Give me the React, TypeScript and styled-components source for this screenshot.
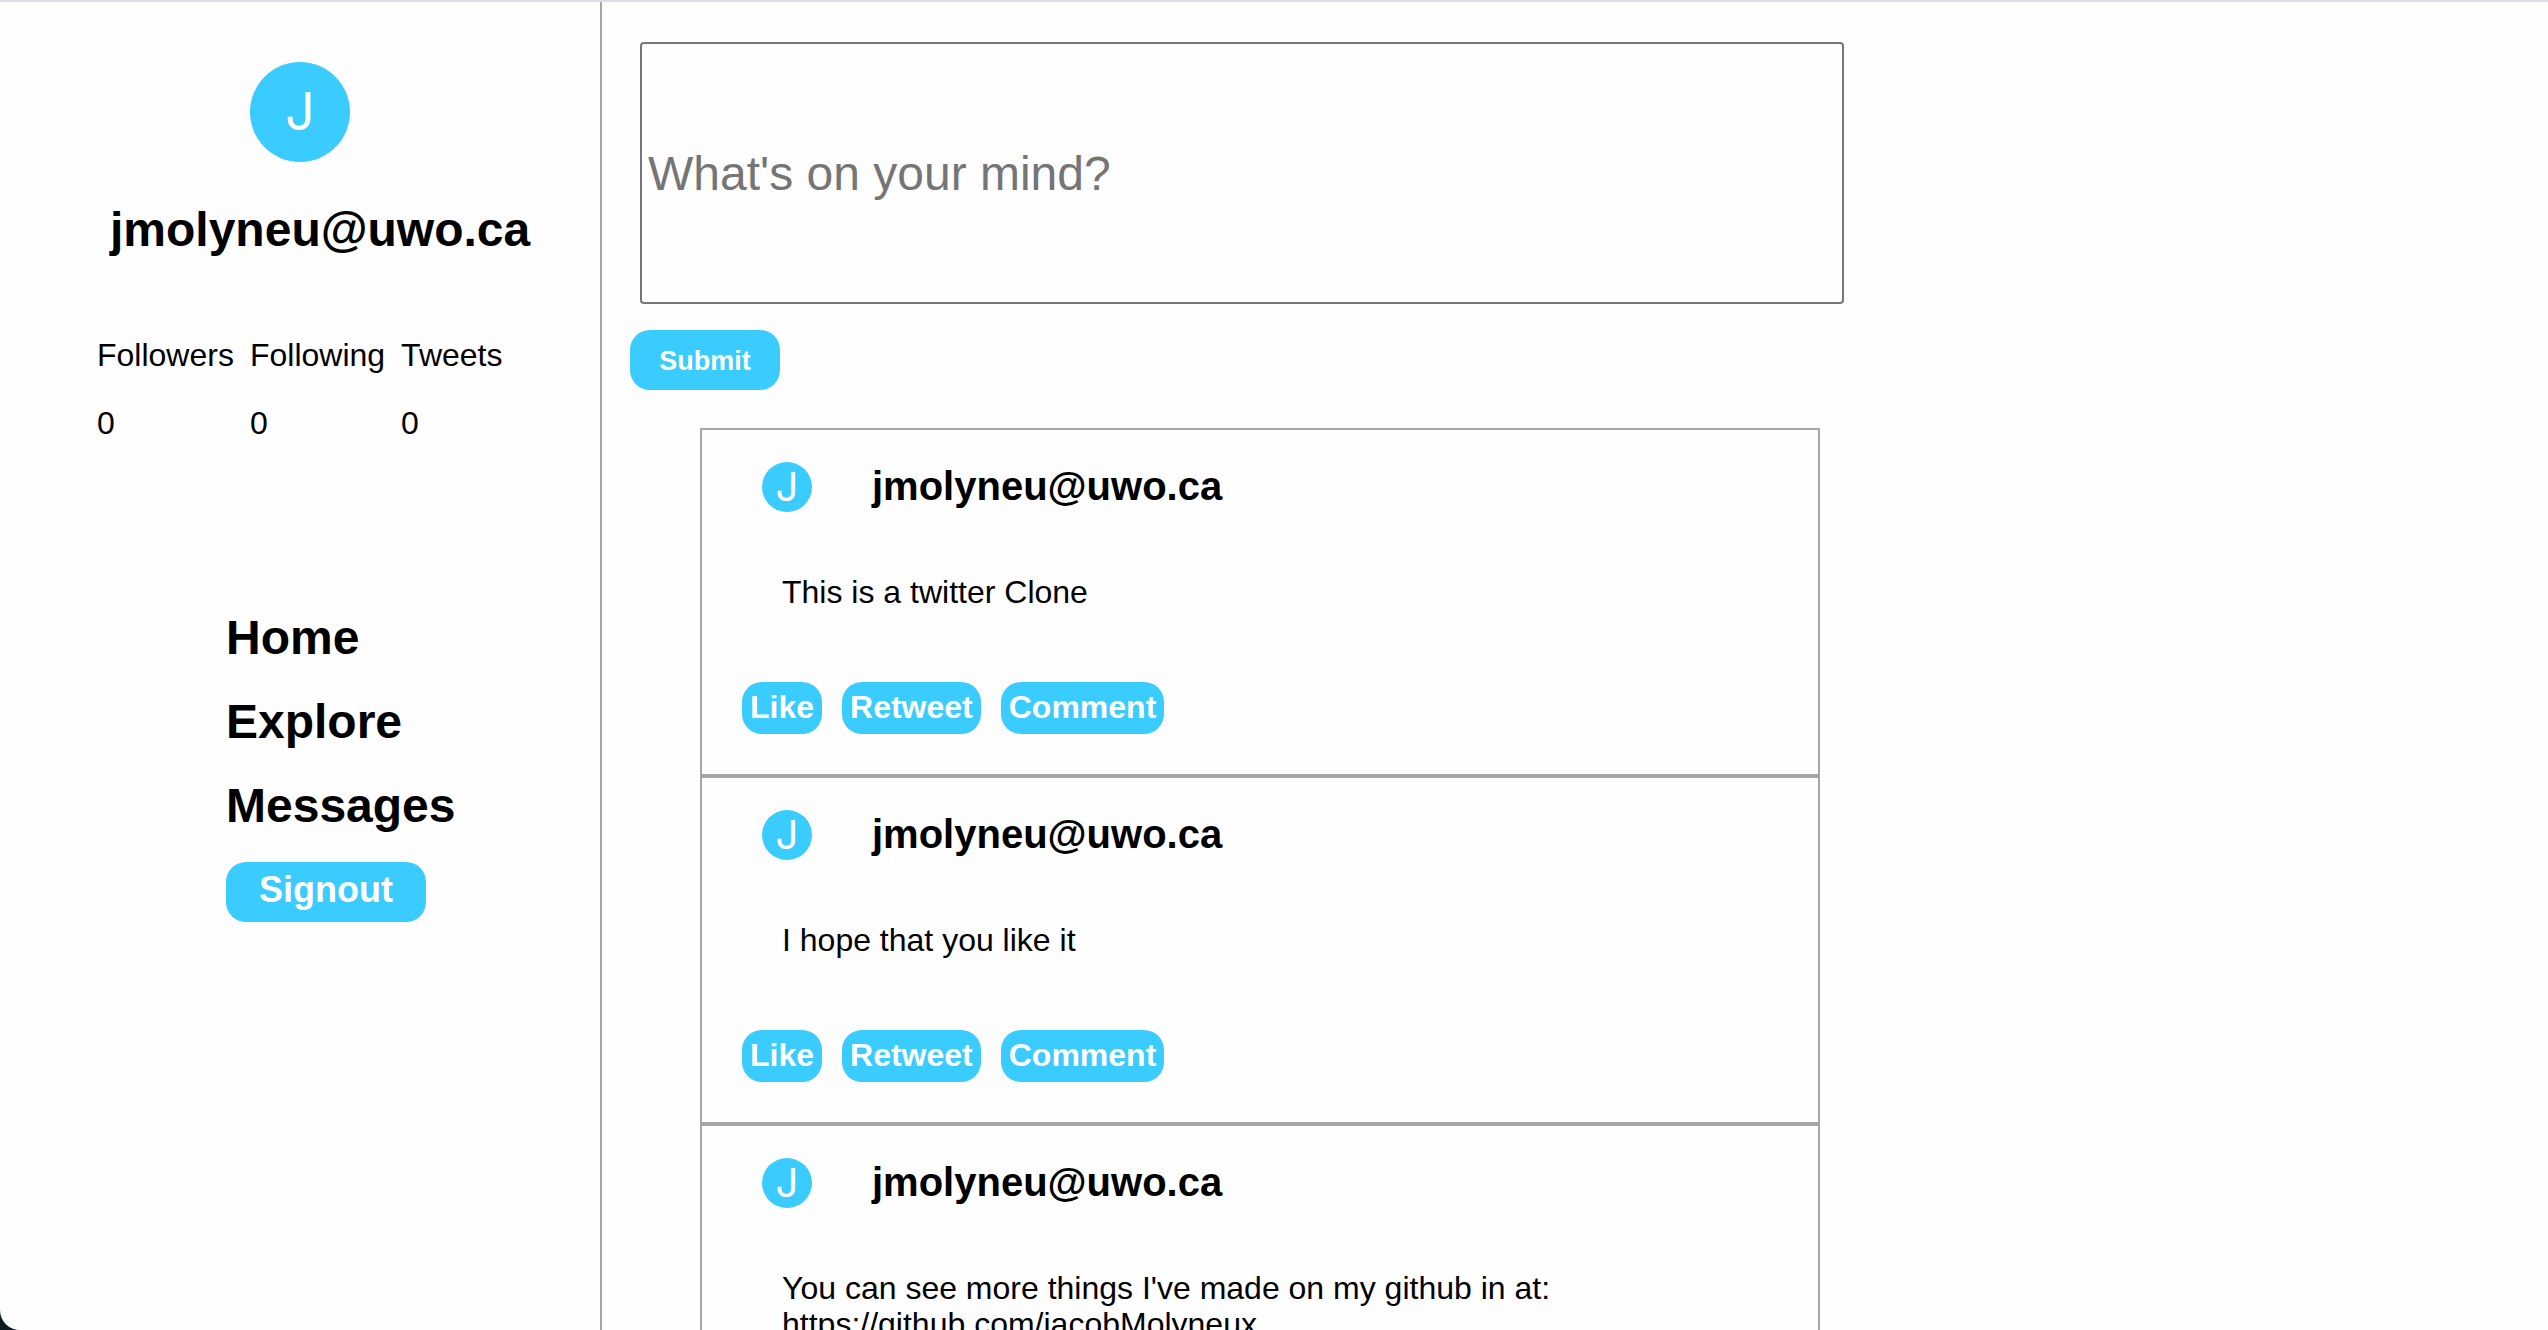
import React from "react";
import styled, { createGlobalStyle } from "styled-components";

const BLUE = "#3acbff";
const LINE = "#a6a6a6";

const GlobalStyle = createGlobalStyle`
  *, *::before, *::after { box-sizing: border-box; }
  body {
    margin: 0;
    background: #0b1c24;
    color: #000;
    font-family: "Liberation Sans", Helvetica, Arial, sans-serif;
    font-size: 32px;
    line-height: 36px;
  }
  h1, h2, p, dl, dd, dt, ul { margin: 0; padding: 0; }
`;

const Page = styled.div`
  display: flex;
  height: 100vh;
  overflow: hidden;
  background: #fefefe;
  border-top: 2px solid #dcdce2;
  border-bottom-left-radius: 20px;
`;

const Sidebar = styled.aside`
  flex: 0 0 602px;
  display: flex;
  flex-direction: column;
  border-right: 2px solid ${LINE};
  padding-top: 60px;
`;

const Avatar = styled.div<{ $size: number; $font: number }>`
  flex: none;
  display: flex;
  align-items: center;
  justify-content: center;
  width: ${(p) => p.$size}px;
  height: ${(p) => p.$size}px;
  border-radius: 50%;
  background: ${BLUE};
  color: #fff;
  font-family: Inter, "Liberation Sans", sans-serif;
  font-size: ${(p) => p.$font}px;
`;

const Profile = styled.section`
  display: flex;
  flex-direction: column;
  align-items: center;
`;

const ProfileName = styled.h1`
  align-self: flex-start;
  margin: 40px 0 0 110px;
  font-size: 48px;
  line-height: 56px;
`;

const Stats = styled.dl`
  display: flex;
  gap: 16px;
  margin: 79px 0 0 97px;
`;

const Stat = styled.div`
  display: flex;
  flex-direction: column;
  gap: 32px;
`;

const Menu = styled.nav`
  display: flex;
  flex-direction: column;
  align-items: flex-start;
  gap: 28px;
  margin: 169px 0 0 226px;
`;

const MenuLink = styled.a`
  color: #000;
  font-size: 48px;
  font-weight: bold;
  line-height: 56px;
  text-decoration: none;
`;

const Button = styled.button`
  border: 0;
  border-radius: 20px;
  background: ${BLUE};
  color: #fff;
  font-family: inherit;
  font-weight: bold;
`;

const SignoutButton = styled(Button)`
  width: 200px;
  height: 60px;
  padding: 0 0 4px;
  font-size: 36px;
`;

const SubmitButton = styled(Button)`
  width: 150px;
  height: 60px;
  padding: 2px 0 0;
  font-size: 27px;
`;

const ActionButton = styled(Button)`
  height: 52px;
  padding: 0 8px 2px;
  font-size: 32px;
`;

const Main = styled.main`
  flex: 1;
  min-width: 0;
  padding: 40px 28px;
`;

const Composer = styled.form`
  display: flex;
  flex-direction: column;
  align-items: flex-start;
  gap: 26px;
`;

const ComposerInput = styled.input`
  width: 1204px;
  max-width: 100%;
  height: 262px;
  margin-left: 10px;
  padding: 2px 6px;
  border: 2px solid #767676;
  border-radius: 4px;
  background: transparent;
  font-family: inherit;
  font-size: 48px;
  &::placeholder { color: #757575; opacity: 1; }
`;

const Feed = styled.section`
  width: 1120px;
  max-width: 100%;
  margin: 38px 0 0 70px;
`;

const Tweet = styled.article`
  display: flex;
  flex-direction: column;
  min-height: 348px;
  padding: 32px 40px 40px;
  border: 2px solid ${LINE};
`;

const TweetHead = styled.header`
  display: flex;
  align-items: center;
  gap: 60px;
  padding-left: 20px;
`;

const TweetName = styled.h2`
  padding-bottom: 2px;
  font-size: 40px;
  line-height: 48px;
`;

const TweetText = styled.p`
  max-width: 840px;
  margin: 62px 0 72px 40px;
`;

const Actions = styled.div`
  display: flex;
  gap: 20px;
`;

const USER = "jmolyneu@uwo.ca";

const stats = [
  { label: "Followers", value: 0 },
  { label: "Following", value: 0 },
  { label: "Tweets", value: 0 },
];

const tweets = [
  "This is a twitter Clone",
  "I hope that you like it",
  "You can see more things I've made on my github in at: https://github.com/jacobMolyneux",
];

export default function App() {
  return (
    <>
      <GlobalStyle />
      <Page>
        <Sidebar>
          <Profile>
            <Avatar $size={100} $font={52}>J</Avatar>
            <ProfileName>{USER}</ProfileName>
          </Profile>
          <Stats>
            {stats.map((s) => (
              <Stat key={s.label}>
                <dt>{s.label}</dt>
                <dd>{s.value}</dd>
              </Stat>
            ))}
          </Stats>
          <Menu>
            <MenuLink href="#home">Home</MenuLink>
            <MenuLink href="#explore">Explore</MenuLink>
            <MenuLink href="#messages">Messages</MenuLink>
            <SignoutButton type="button">Signout</SignoutButton>
          </Menu>
        </Sidebar>
        <Main>
          <Composer onSubmit={(e) => e.preventDefault()}>
            <ComposerInput type="text" aria-label="What's on your mind?" placeholder="What's on your mind?" />
            <SubmitButton type="submit">Submit</SubmitButton>
          </Composer>
          <Feed>
            {tweets.map((text) => (
              <Tweet key={text}>
                <TweetHead>
                  <Avatar $size={50} $font={40}>J</Avatar>
                  <TweetName>{USER}</TweetName>
                </TweetHead>
                <TweetText>{text}</TweetText>
                <Actions>
                  <ActionButton type="button">Like</ActionButton>
                  <ActionButton type="button">Retweet</ActionButton>
                  <ActionButton type="button">Comment</ActionButton>
                </Actions>
              </Tweet>
            ))}
          </Feed>
        </Main>
      </Page>
    </>
  );
}
